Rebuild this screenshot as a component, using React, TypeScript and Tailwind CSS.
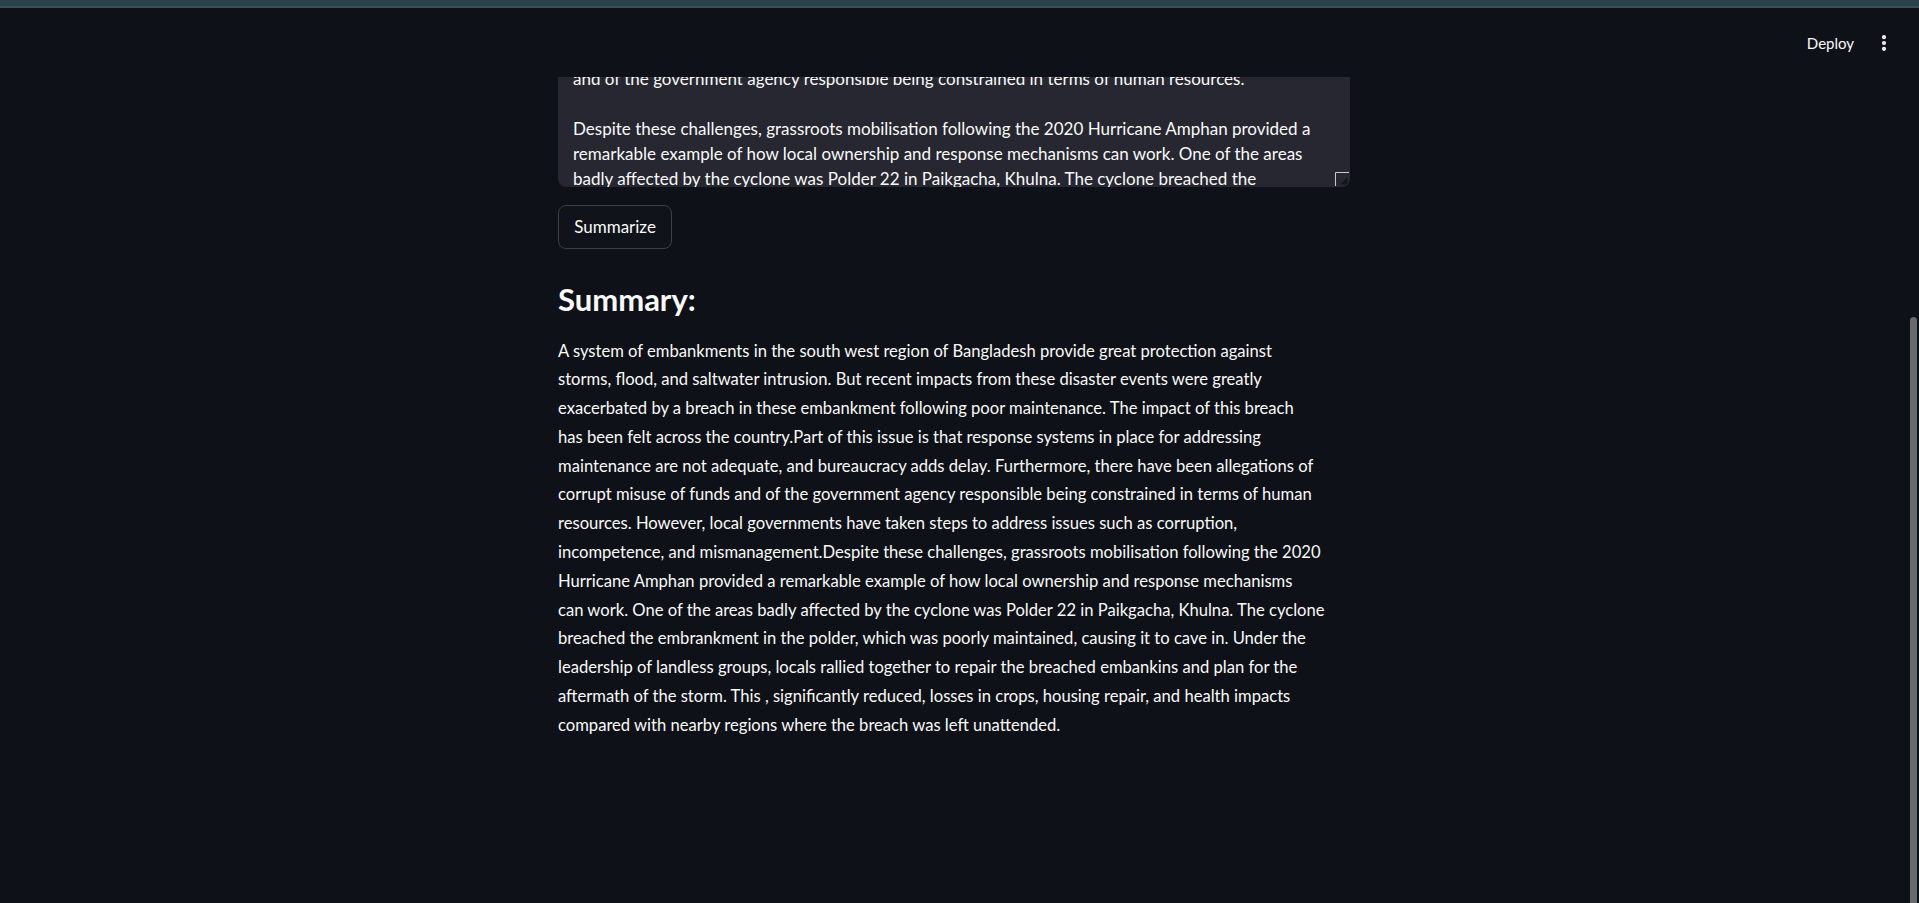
import { EllipsisVertical } from 'lucide-react'

const INPUT_LINES = [
  'and of the government agency responsible being constrained in terms of human resources.',
  '',
  'Despite these challenges, grassroots mobilisation following the 2020 Hurricane Amphan provided a',
  'remarkable example of how local ownership and response mechanisms can work. One of the areas',
  'badly affected by the cyclone was Polder 22 in Paikgacha, Khulna. The cyclone breached the',
]

const SUMMARY_LINES = [
  'A system of embankments in the south west region of Bangladesh provide great protection against',
  'storms, flood, and saltwater intrusion. But recent impacts from these disaster events were greatly',
  'exacerbated by a breach in these embankment following poor maintenance. The impact of this breach',
  'has been felt across the country.Part of this issue is that response systems in place for addressing',
  'maintenance are not adequate, and bureaucracy adds delay. Furthermore, there have been allegations of',
  'corrupt misuse of funds and of the government agency responsible being constrained in terms of human',
  'resources. However, local governments have taken steps to address issues such as corruption,',
  'incompetence, and mismanagement.Despite these challenges, grassroots mobilisation following the 2020',
  'Hurricane Amphan provided a remarkable example of how local ownership and response mechanisms',
  'can work. One of the areas badly affected by the cyclone was Polder 22 in Paikgacha, Khulna. The cyclone',
  'breached the embrankment in the polder, which was poorly maintained, causing it to cave in. Under the',
  'leadership of landless groups, locals rallied together to repair the breached embankins and plan for the',
  'aftermath of the storm. This , significantly reduced, losses in crops, housing repair, and health impacts',
  'compared with nearby regions where the breach was left unattended.',
]

function ResizeGrip() {
  return (
    <svg width="14" height="14" viewBox="0 0 14 14" className="absolute bottom-[1px] right-[1px]">
      <path d="M0.5 14 V0.5 H14" fill="none" stroke="#c8c8cc" strokeWidth="1" />
      <path d="M7 12 L12 7 M10 12 L12 10" stroke="#111" strokeWidth="1.6" strokeLinecap="round" />
    </svg>
  )
}

export default function App() {
  return (
    <div className="relative flex h-[903px] w-full overflow-hidden bg-[#0e1117] font-[Lato,sans-serif] text-[#fafafa]">
      {/* ── Header overlay ─── */}
      <header className="absolute inset-x-0 top-0 z-10 h-[77px] bg-[#0e1117]">
        <div className="h-[6px] bg-[#29434a]" />
        <div className="h-[2px] bg-[#3c5054]" />
        <div className="flex items-center justify-end pr-[25px] pt-[25px]">
          <span className="text-[15px] leading-none">Deploy</span>
          <EllipsisVertical size={20} strokeWidth={3} className="ml-[20px] text-[#fafafa]" />
        </div>
      </header>

      {/* ── Main column ─── */}
      <main className="flex flex-1 justify-center pl-[3px] pt-[77px]">
        <div className="w-[792px]">
          {/* Text area (scrolled) */}
          <div className="relative h-[110px] overflow-hidden rounded-b-[8px] bg-[#262730]">
            <div className="-mt-[11.5px] whitespace-pre pl-[15px] text-[17px] leading-[25px]">
              {INPUT_LINES.map((line, i) => (
                <div key={i} className="h-[25px]">{line}</div>
              ))}
            </div>
            <ResizeGrip />
          </div>

          <button className="mt-[18px] flex h-[44px] w-[114px] items-center justify-center rounded-[8px] border border-[#3d4047] bg-[#10131a] text-[17px]">
            Summarize
          </button>

          <h3 className="mt-[32px] text-[31px] font-bold leading-[37px]">Summary:</h3>

          <p className="mt-[18.5px] text-[16.6px] leading-[28.8px]">
            {SUMMARY_LINES.map((line, i) => (
              <span key={i} className="block whitespace-nowrap">{line}</span>
            ))}
          </p>
        </div>
      </main>

      {/* ── Scrollbar ─── */}
      <div className="w-[14px] pt-[317px]">
        <div className="ml-[5px] h-full w-[7px] rounded-t-full bg-[#69696e]" />
      </div>
    </div>
  )
}
